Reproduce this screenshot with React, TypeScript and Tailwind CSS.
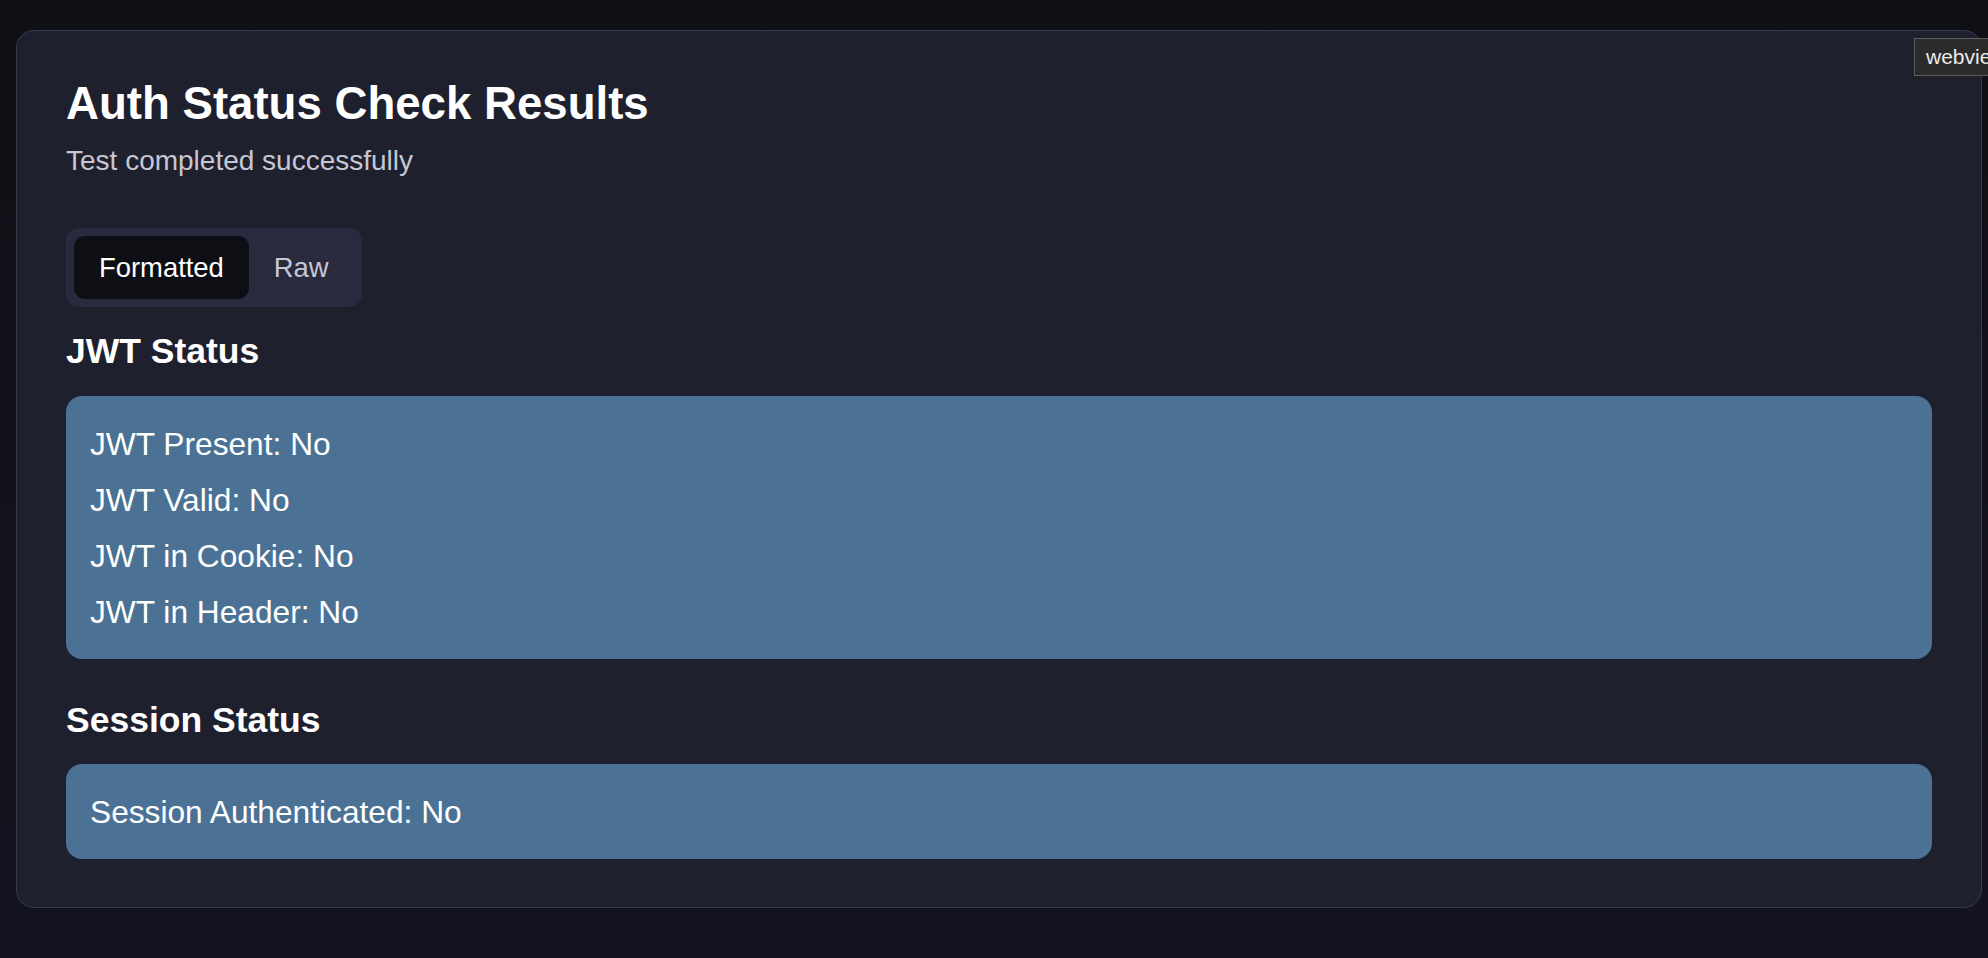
import React, { useState } from 'react';

const jwtRows = [
  { label: 'JWT Present', value: 'No' },
  { label: 'JWT Valid', value: 'No' },
  { label: 'JWT in Cookie', value: 'No' },
  { label: 'JWT in Header', value: 'No' },
];

const sessionRows = [{ label: 'Session Authenticated', value: 'No' }];

function StatusBox({ rows }: { rows: { label: string; value: string }[] }) {
  return (
    <div className="rounded-[16px] bg-[#4b7295] px-[24px] pt-[20px] pb-[19px]">
      {rows.map((row) => (
        <p key={row.label} className="text-[31.7px] leading-[56px] text-white">
          {row.label}: {row.value}
        </p>
      ))}
    </div>
  );
}

export default function App() {
  const [tab, setTab] = useState<'formatted' | 'raw'>('formatted');

  return (
    <div
      className="relative min-h-screen w-full overflow-hidden bg-gradient-to-b from-[#0f1015] to-[#131420] pt-[30px] pl-[16px]"
      style={{ fontFamily: '"Liberation Sans", Arial, Helvetica, sans-serif' }}
    >
      <div className="w-[1966px] rounded-[18px] border border-[#383954] bg-[#1f202d] px-[49px] pt-[47px] pb-[48px]">
        <h1 className="text-[45.6px] font-bold leading-[52px] text-white">Auth Status Check Results</h1>
        <p className="mt-[15px] text-[28px] leading-[32px] text-[#c6c7d4]">Test completed successfully</p>

        <div className="mt-[51px] inline-flex rounded-[13px] bg-[#292a3d] p-[8px]">
          <button
            onClick={() => setTab('formatted')}
            className={`h-[63px] rounded-[11px] px-[25px] text-[27.4px] ${
              tab === 'formatted' ? 'bg-[#0e0f14] text-white' : 'text-[#c6c7d4]'
            }`}
          >
            Formatted
          </button>
          <button
            onClick={() => setTab('raw')}
            className={`h-[63px] rounded-[11px] px-[25px] text-[27.4px] ${
              tab === 'raw' ? 'bg-[#0e0f14] text-white' : 'text-[#c6c7d4]'
            }`}
          >
            Raw
          </button>
        </div>

        <h2 className="mt-[23px] text-[35.5px] font-bold leading-[42px] text-white">JWT Status</h2>
        <div className="mt-[24px]">
          <StatusBox rows={jwtRows} />
        </div>

        <h2 className="mt-[40px] text-[35.5px] font-bold leading-[42px] text-white">Session Status</h2>
        <div className="mt-[23px]">
          <StatusBox rows={sessionRows} />
        </div>
      </div>

      {/* tooltip from the host, cut off by the window edge */}
      <div className="absolute left-[1914px] top-[38px] h-[38px] whitespace-nowrap border border-[#5c5c5c] bg-[#2b2b2b] pl-[11px] pr-[12px] text-[21px] leading-[36px] text-[#ececec]">
        webview
      </div>
    </div>
  );
}
